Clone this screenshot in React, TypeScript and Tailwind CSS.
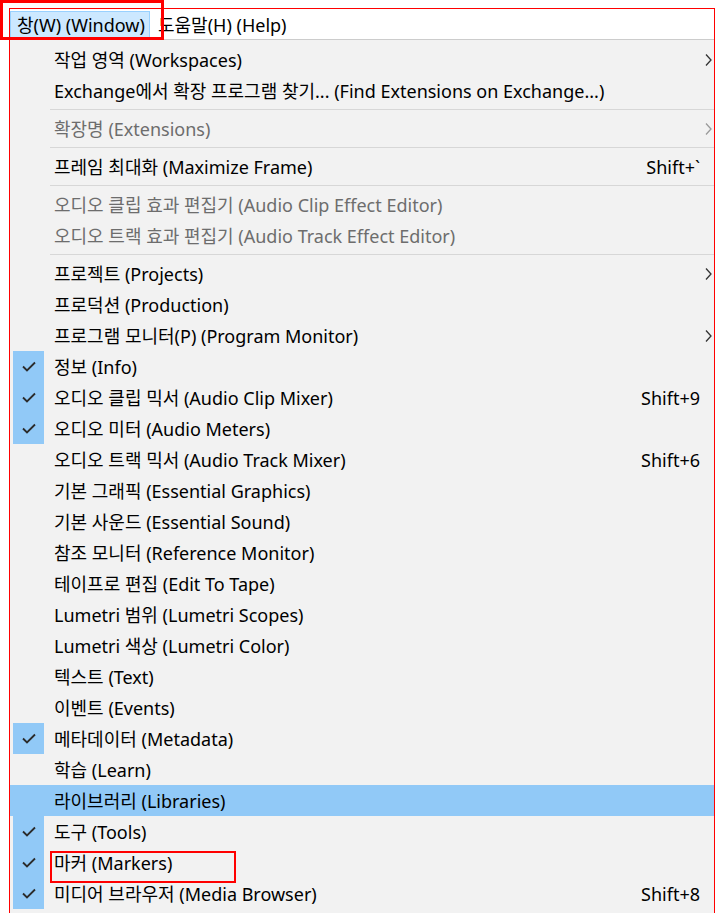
import React from 'react';

type Item =
  | { kind: 'sep' }
  | {
      kind: 'item';
      ko: string;
      en: string;
      shortcut?: string;
      sub?: boolean;
      disabled?: boolean;
      checked?: boolean;
      active?: boolean;
    };

const ITEMS: Item[] = [
  { kind: 'item', ko: '작업 영역', en: '(Workspaces)', sub: true },
  { kind: 'item', ko: 'Exchange에서 확장 프로그램 찾기...', en: '(Find Extensions on Exchange...)' },
  { kind: 'sep' },
  { kind: 'item', ko: '확장명', en: '(Extensions)', sub: true, disabled: true },
  { kind: 'sep' },
  { kind: 'item', ko: '프레임 최대화', en: '(Maximize Frame)', shortcut: 'Shift+`' },
  { kind: 'sep' },
  { kind: 'item', ko: '오디오 클립 효과 편집기', en: '(Audio Clip Effect Editor)', disabled: true },
  { kind: 'item', ko: '오디오 트랙 효과 편집기', en: '(Audio Track Effect Editor)', disabled: true },
  { kind: 'sep' },
  { kind: 'item', ko: '프로젝트', en: '(Projects)', sub: true },
  { kind: 'item', ko: '프로덕션', en: '(Production)' },
  { kind: 'item', ko: '프로그램 모니터(P)', en: '(Program Monitor)', sub: true },
  { kind: 'item', ko: '정보', en: '(Info)', checked: true },
  { kind: 'item', ko: '오디오 클립 믹서', en: '(Audio Clip Mixer)', checked: true, shortcut: 'Shift+9' },
  { kind: 'item', ko: '오디오 미터', en: '(Audio Meters)', checked: true },
  { kind: 'item', ko: '오디오 트랙 믹서', en: '(Audio Track Mixer)', shortcut: 'Shift+6' },
  { kind: 'item', ko: '기본 그래픽', en: '(Essential Graphics)' },
  { kind: 'item', ko: '기본 사운드', en: '(Essential Sound)' },
  { kind: 'item', ko: '참조 모니터', en: '(Reference Monitor)' },
  { kind: 'item', ko: '테이프로 편집', en: '(Edit To Tape)' },
  { kind: 'item', ko: 'Lumetri 범위', en: '(Lumetri Scopes)' },
  { kind: 'item', ko: 'Lumetri 색상', en: '(Lumetri Color)' },
  { kind: 'item', ko: '텍스트', en: '(Text)' },
  { kind: 'item', ko: '이벤트', en: '(Events)' },
  { kind: 'item', ko: '메타데이터', en: '(Metadata)', checked: true },
  { kind: 'item', ko: '학습', en: '(Learn)' },
  { kind: 'item', ko: '라이브러리', en: '(Libraries)', active: true },
  { kind: 'item', ko: '도구', en: '(Tools)', checked: true },
  { kind: 'item', ko: '마커', en: '(Markers)', checked: true },
  { kind: 'item', ko: '미디어 브라우저', en: '(Media Browser)', checked: true, shortcut: 'Shift+8' },
];

const Check = () => (
  <svg width="14" height="11" viewBox="0 0 14 11" fill="none">
    <path d="M1 5.5 L5 9.5 L13 1.5" stroke="#2b2b2b" strokeWidth="1.8" />
  </svg>
);

const Chevron = ({ gray }: { gray?: boolean }) => (
  <svg width="7" height="12" viewBox="0 0 7 12" fill="none">
    <path d="M1 0.5 L6 6 L1 11.5" stroke={gray ? '#9a9a9a' : '#333'} strokeWidth="1.3" />
  </svg>
);

const Row = ({ item }: { item: Extract<Item, { kind: 'item' }> }) => (
  <div className={`flex h-[31px] items-center ${item.active ? 'bg-[#91c9f7]' : ''}`}>
    <div className="flex h-full w-[44px] items-center pl-[3px]">
      <div
        className={`flex h-full w-[31px] items-center justify-center ${
          item.checked || item.active ? 'bg-[#91c9f7]' : ''
        }`}
      >
        {item.checked && <Check />}
      </div>
    </div>
    <div className={`flex-1 whitespace-nowrap pt-px ${item.disabled ? 'text-[#6d6d6d]' : 'text-black'}`}>
      {item.ko} {item.en}
    </div>
    {item.shortcut && <div className="whitespace-nowrap pt-px text-black">{item.shortcut}</div>}
    <div className="flex w-[14px] items-center justify-end pr-[2px]">
      {item.sub && <Chevron gray={item.disabled} />}
    </div>
  </div>
);

export default function App() {
  return (
    <div
      className="relative h-[914px] w-[715px] overflow-hidden bg-white text-[18px] leading-none"
      style={{ fontFamily: "'Noto Sans', 'Noto Sans CJK KR', sans-serif" }}
    >
      <div className="ml-[9px] mt-[8px] h-[905px] w-[706px] border border-[#ff0000]">
        {/* menu bar */}
        <div className="flex h-[31px] items-start border-b border-[#cccccc] bg-white">
          <div className="mt-[2px] flex h-[27px] w-[140px] items-center border border-[#99d1ff] bg-[#cce8ff] pl-[6px] text-black">
            창(W) (Window)
          </div>
          <div className="mt-[2px] flex h-[27px] items-center pl-[8px] text-black">도움말(H) (Help)</div>
        </div>
        {/* dropdown */}
        <div className="h-[873px] bg-[#f2f2f2] pt-[4px]">
          {ITEMS.map((item, i) =>
            item.kind === 'sep' ? (
              <div key={i} className="flex h-[7px] items-center pl-[40px]">
                <div className="h-px flex-1 bg-[#d7d7d7]" />
              </div>
            ) : (
              <Row key={i} item={item} />
            )
          )}
        </div>
      </div>

      {/* annotation boxes */}
      <div className="absolute left-0 top-0 h-[40px] w-[164px] border-[3px] border-[#ff0000]" />
      <div className="absolute left-[50px] top-[851px] h-[32px] w-[186px] border-[2px] border-[#ff0000]" />
    </div>
  );
}
